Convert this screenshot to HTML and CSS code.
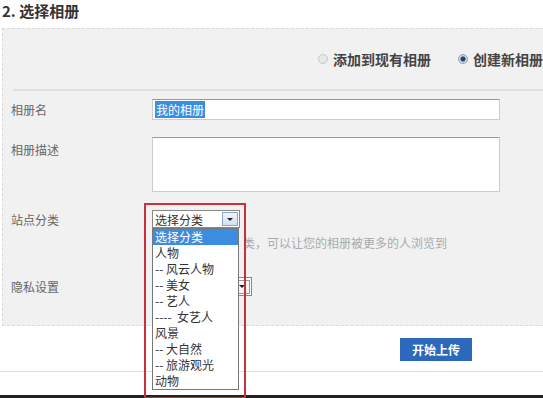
FILE: index.html
```html
<!DOCTYPE html>
<html lang="zh-CN">
<head>
<meta charset="UTF-8" />
<title>选择相册</title>
<link rel="stylesheet" href="styles.css">
</head>
<body>

<h2 class="step-title">2. 选择相册</h2>

<div class="album-panel">
  <div class="mode-row">
    <label class="radio"><span class="dot"></span>添加到现有相册</label>
    <label class="radio"><span class="dot checked"></span>创建新相册</label>
  </div>

  <div class="form-row">
    <span class="field-label">相册名</span>
    <div class="text-input"><span class="selected-text">我的相册</span></div>
  </div>

  <div class="form-row top">
    <span class="field-label">相册描述</span>
    <div class="text-area"></div>
  </div>

  <div class="form-row cat-row">
    <span class="field-label">站点分类</span>
    <div class="select-wrap">
      <div class="fake-select cat-select">
        <span>选择分类</span>
        <span class="arrow-btn"><i></i></span>
      </div>
      <ul class="drop-list">
        <li class="active">选择分类</li>
        <li>人物</li>
        <li>-- 风云人物</li>
        <li>-- 美女</li>
        <li>-- 艺人</li>
        <li>----&nbsp;&nbsp;女艺人</li>
        <li>风景</li>
        <li>-- 大自然</li>
        <li>-- 旅游观光</li>
        <li>动物</li>
      </ul>
      <div class="mark-box"></div>
    </div>
  </div>
  <p class="hint">类，可以让您的相册被更多的人浏览到</p>

  <div class="form-row privacy-row">
    <span class="field-label">隐私设置</span>
    <div class="fake-select privacy-select">
      <span class="arrow-btn plain"><i></i></span>
    </div>
  </div>
</div>

<div class="actions">
  <button type="button" class="upload-btn">开始上传</button>
</div>
<div class="foot-line"></div>
<div class="frame-edge"></div>

</body>
</html>
```

FILE: styles.css
```css
body {
  margin: 0;
  background: #fff;
  font-family: "Noto Sans CJK SC", "Noto Sans", sans-serif;
  font-size: 12px;
  color: #555;
  overflow: hidden;
}
.step-title {
  margin: 0;
  height: 28px;
  padding-left: 2px;
  font-size: 15px;
  line-height: 21px;
  font-weight: bold;
  color: #333;
}
.album-panel {
  margin-left: 2px;
  margin-right: -20px;
  height: 298px;
  box-sizing: border-box;
  background: #f1f1f1;
  border: 1px dashed #dcdcdc;
}
.mode-row {
  height: 60px;
  margin-left: 10px;
  border-bottom: 2px solid #e0e0e0;
  display: flex;
  align-items: center;
  padding-left: 305px;
  gap: 27px;
  white-space: nowrap;
}
.radio {
  display: flex;
  align-items: center;
  font-size: 14px;
  font-weight: bold;
  color: #444;
}
.dot {
  width: 8px;
  height: 8px;
  margin-right: 5px;
  border-radius: 50%;
  border: 1px solid #c8c8c8;
  background: #e8e8e8;
}
.dot.checked {
  border-color: #8fa4bd;
  background: radial-gradient(circle, #2b3f5c 0 2px, #c9d6e6 3px);
}
.form-row {
  display: flex;
  align-items: center;
  padding-left: 8px;
  margin-top: 8px;
}
.form-row.top {
  align-items: flex-start;
  margin-top: 17px;
}
.form-row.top .field-label {
  padding-top: 4px;
}
.field-label {
  width: 141px;
  flex: none;
  color: #666;
}
.text-input {
  width: 348px;
  height: 21px;
  box-sizing: border-box;
  background: #fff;
  border: 1px solid #ccc;
  border-top-color: #999;
  padding: 2px 2px;
  line-height: 15px;
}
.selected-text {
  background: #3b8de0;
  color: #fff;
  padding: 0 1px;
}
.text-area {
  width: 348px;
  height: 55px;
  box-sizing: border-box;
  background: #fff;
  border: 1px solid #ccc;
  border-top-color: #999;
}
.cat-row {
  margin-top: 18px;
}
.select-wrap {
  position: relative;
}
.fake-select {
  display: flex;
  align-items: center;
  justify-content: space-between;
  box-sizing: border-box;
  background: #fff;
  border: 1px solid #888;
  color: #333;
  padding-left: 2px;
}
.cat-select {
  width: 88px;
  height: 18px;
}
.arrow-btn {
  width: 16px;
  height: 14px;
  margin-right: 1px;
  box-sizing: border-box;
  border: 1px solid #8aa6c8;
  background: linear-gradient(#eef4fb, #d3e1f1);
  display: flex;
  align-items: center;
  justify-content: center;
}
.arrow-btn i {
  width: 0;
  height: 0;
  border-left: 3px solid transparent;
  border-right: 3px solid transparent;
  border-top: 3px solid #222;
}
.arrow-btn.plain {
  background: #f4f4f4;
  border-color: #999;
}
.drop-list {
  position: absolute;
  left: 0;
  top: 18px;
  z-index: 2;
  width: 87px;
  margin: 0;
  padding: 0;
  list-style: none;
  background: #fff;
  border: 1px solid #777;
  box-sizing: border-box;
}
.drop-list li {
  height: 16px;
  line-height: 16px;
  padding-left: 2px;
  color: #333;
  white-space: pre;
}
.drop-list li.active {
  background: #3b8de0;
  color: #fff;
}
.mark-box {
  position: absolute;
  left: -8px;
  top: -7px;
  z-index: 3;
  width: 102px;
  height: 196px;
  box-sizing: border-box;
  border: 2px solid #c9303c;
}
.hint {
  margin: 9px 0 0 240px;
  color: #aaa;
  line-height: 12px;
}
.privacy-row {
  margin-top: 28px;
}
.privacy-select {
  width: 100px;
  height: 19px;
  justify-content: flex-end;
}
.actions {
  display: flex;
  padding: 12px 0 0 400px;
}
.upload-btn {
  width: 72px;
  height: 23px;
  border: none;
  background: #2c69ba;
  color: #fff;
  font-family: inherit;
  font-size: 12px;
  font-weight: bold;
  padding: 0;
}
.foot-line {
  margin-top: 10px;
  height: 1px;
  background: #dedede;
}
.frame-edge {
  margin-top: 23px;
  height: 3px;
  background: #222;
}
```
